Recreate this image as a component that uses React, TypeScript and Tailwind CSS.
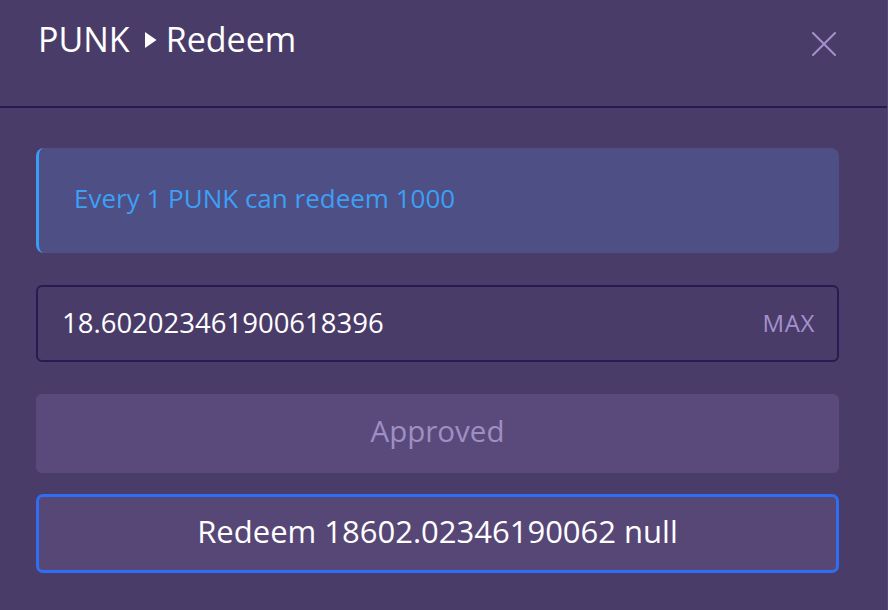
export default function App() {
  return (
    <div
      className="w-[888px] h-[610px] bg-[#4a3c69] overflow-hidden flex flex-col border-r border-[#544775]"
      style={{ fontFamily: '"Open Sans", sans-serif' }}
    >
      {/* header */}
      <div className="h-[108px] shrink-0 flex items-start justify-between pl-[38px] pr-[51px] border-b-2 border-[#2a1a52]">
        <div className="flex items-center mt-[16px] text-[34px] leading-[46px] text-white">
          <span>PUNK</span>
          <svg width="12" height="16" viewBox="0 0 12 16" className="ml-[15px] mr-[9px] mt-[2px]">
            <path d="M0 0 L11.5 8 L0 16 Z" fill="white" />
          </svg>
          <span>Redeem</span>
        </div>
        <button className="mt-[32px] text-[#a291cc]">
          <svg width="24" height="24" viewBox="0 0 24 24" fill="none" stroke="currentColor" strokeWidth="2" strokeLinecap="round">
            <path d="M1 1 L23 23 M23 1 L1 23" />
          </svg>
        </button>
      </div>

      <div className="flex flex-col pl-[36px] pr-[48px] pt-[40px]">
        {/* info */}
        <div className="h-[105px] rounded-[8px] border-l-[3px] border-[#3b9cf5] bg-[#4d4f85] flex items-center pl-[35px] pb-[5px]">
          <span className="text-[26px] text-[#3d9ff5]">Every 1 PUNK can redeem 1000</span>
        </div>

        {/* input */}
        <div className="mt-[32px] h-[77px] rounded-[6px] border-2 border-[#2a1a52] flex items-center justify-between pr-[22px] pb-[2px]">
          <input
            className="flex-1 min-w-0 bg-transparent outline-none pl-[24px] text-[27.5px] text-white"
            defaultValue="18.602023461900618396"
          />
          <span className="text-[24px] text-[#a291cc] tracking-wide">MAX</span>
        </div>

        {/* approved */}
        <button className="mt-[32px] h-[79px] rounded-[6px] bg-[#5a4a7c] text-[29.5px] text-[#9e8fc2] pb-[4px]">
          Approved
        </button>

        {/* redeem */}
        <button className="mt-[21px] h-[79px] rounded-[7px] border-[3px] border-[#2f6df2] bg-[#574777] text-[31px] text-white pb-[5px]">
          Redeem 18602.02346190062 null
        </button>
      </div>
    </div>
  );
}
